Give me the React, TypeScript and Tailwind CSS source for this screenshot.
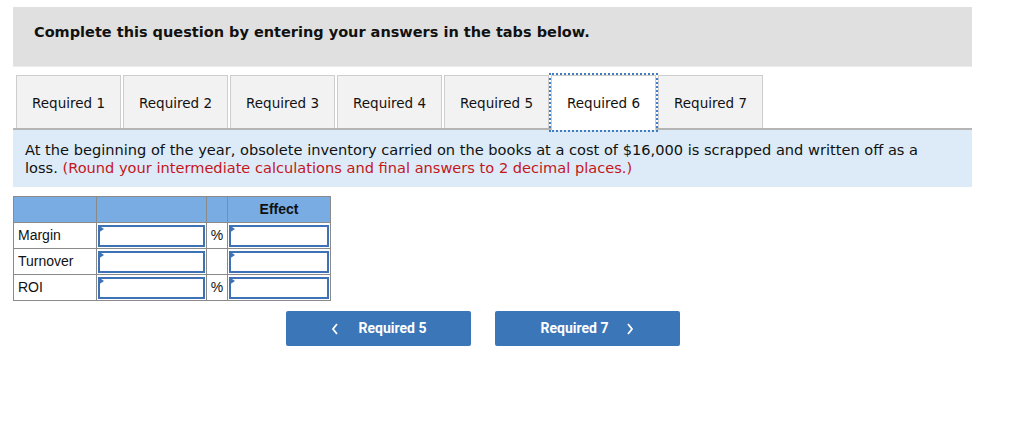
import React from "react";

const tabs = ["Required 1", "Required 2", "Required 3", "Required 4", "Required 5", "Required 6", "Required 7"];

function InputCell() {
  return (
    <td className="border border-[#8a8a8a] p-[1px] h-[26px]">
      <div className="relative h-[22px] w-full border-2 border-[#3d72b4] bg-white">
        <svg className="absolute left-[-2px] top-[-2px]" width="6" height="8" viewBox="0 0 6 8">
          <polygon points="0,0 6,4 0,8" fill="#3d72b4" />
        </svg>
      </div>
    </td>
  );
}

export default function App() {
  const verdana = { fontFamily: '"DejaVu Sans", Verdana, sans-serif' };
  return (
    <div className="w-[1024px] h-[436px] bg-white pt-[7px] pl-[13px]">
      <div className="w-[959px]">
        <div className="h-[60px] bg-[#e0e0e0] border-b border-[#ececec] pl-[21px] pt-[13px]" style={verdana}>
          <span className="text-[14.5px] font-bold text-[#111]">Complete this question by entering your answers in the tabs below.</span>
        </div>
        <div className="mt-[8px] flex gap-[2px] pl-[3px] border-b-2 border-[#b5b5b5]" style={verdana}>
          {tabs.map((t, i) => (
            <div
              key={t}
              className={
                i === 5
                  ? "relative w-[105px] h-[55px] -mb-[2px] bg-white flex items-center justify-center text-[13.5px] text-[#111] outline-2 outline-dotted outline-[#3d7cc4] border border-[#ccc] border-b-0"
                  : "w-[105px] h-[53px] bg-[#f2f2f2] border border-[#cdcdcd] border-b-0 flex items-center justify-center text-[13.5px] text-[#111]"
              }
            >
              <span className={i === 5 ? "mt-[1px]" : "mt-[3px]"}>{t}</span>
            </div>
          ))}
        </div>
        <div className="bg-[#dcebf7] h-[57px] pl-[12px] pt-[11px] text-[14.6px] leading-[18px] text-[#111] whitespace-nowrap" style={verdana}>
          At the beginning of the year, obsolete inventory carried on the books at a cost of $16,000 is scrapped and written off as a
          <br />
          loss. <span className="text-[#c4161c]">(Round your intermediate calculations and final answers to 2 decimal places.)</span>
        </div>
        <table
          className="mt-[9px] border-collapse border border-[#8a8a8a] text-[14px] text-[#111]"
          style={{ fontFamily: '"Liberation Sans", Arial, sans-serif' }}
        >
          <colgroup>
            <col className="w-[83px]" />
            <col className="w-[110px]" />
            <col className="w-[21px]" />
            <col className="w-[103px]" />
          </colgroup>
          <thead>
            <tr className="h-[26px] bg-[#78ace2]">
              <th className="border border-[#8a8a8a]"></th>
              <th className="border border-[#8a8a8a]"></th>
              <th className="border border-[#8a8a8a]"></th>
              <th className="border border-[#8a8a8a] font-bold text-center">Effect</th>
            </tr>
          </thead>
          <tbody>
            {[
              ["Margin", true],
              ["Turnover", false],
              ["ROI", true],
            ].map(([label, pct]) => (
              <tr key={label as string} className="h-[26px]">
                <td className="border border-[#8a8a8a] pl-[4px] text-left">{label as string}</td>
                <InputCell />
                <td className="border border-[#8a8a8a] text-center">{pct ? "%" : ""}</td>
                <InputCell />
              </tr>
            ))}
          </tbody>
        </table>
        <div className="mt-[10px] flex gap-[24px] pl-[273px]" style={{ fontFamily: 'Roboto, "Liberation Sans", sans-serif' }}>
          <button className="w-[185px] h-[35px] bg-[#3a76b8] rounded-[2px] text-white text-[14px] font-bold flex items-center justify-center">
            <svg width="8" height="12" viewBox="0 0 8 12" className="mr-[20px]">
              <polyline points="6,1 2,6 6,11" fill="none" stroke="white" strokeWidth="1.8" />
            </svg>
            Required 5
          </button>
          <button className="w-[185px] h-[35px] bg-[#3a76b8] rounded-[2px] text-white text-[14px] font-bold flex items-center justify-center">
            Required 7
            <svg width="8" height="12" viewBox="0 0 8 12" className="ml-[18px]">
              <polyline points="2,1 6,6 2,11" fill="none" stroke="white" strokeWidth="1.8" />
            </svg>
          </button>
        </div>
      </div>
    </div>
  );
}
